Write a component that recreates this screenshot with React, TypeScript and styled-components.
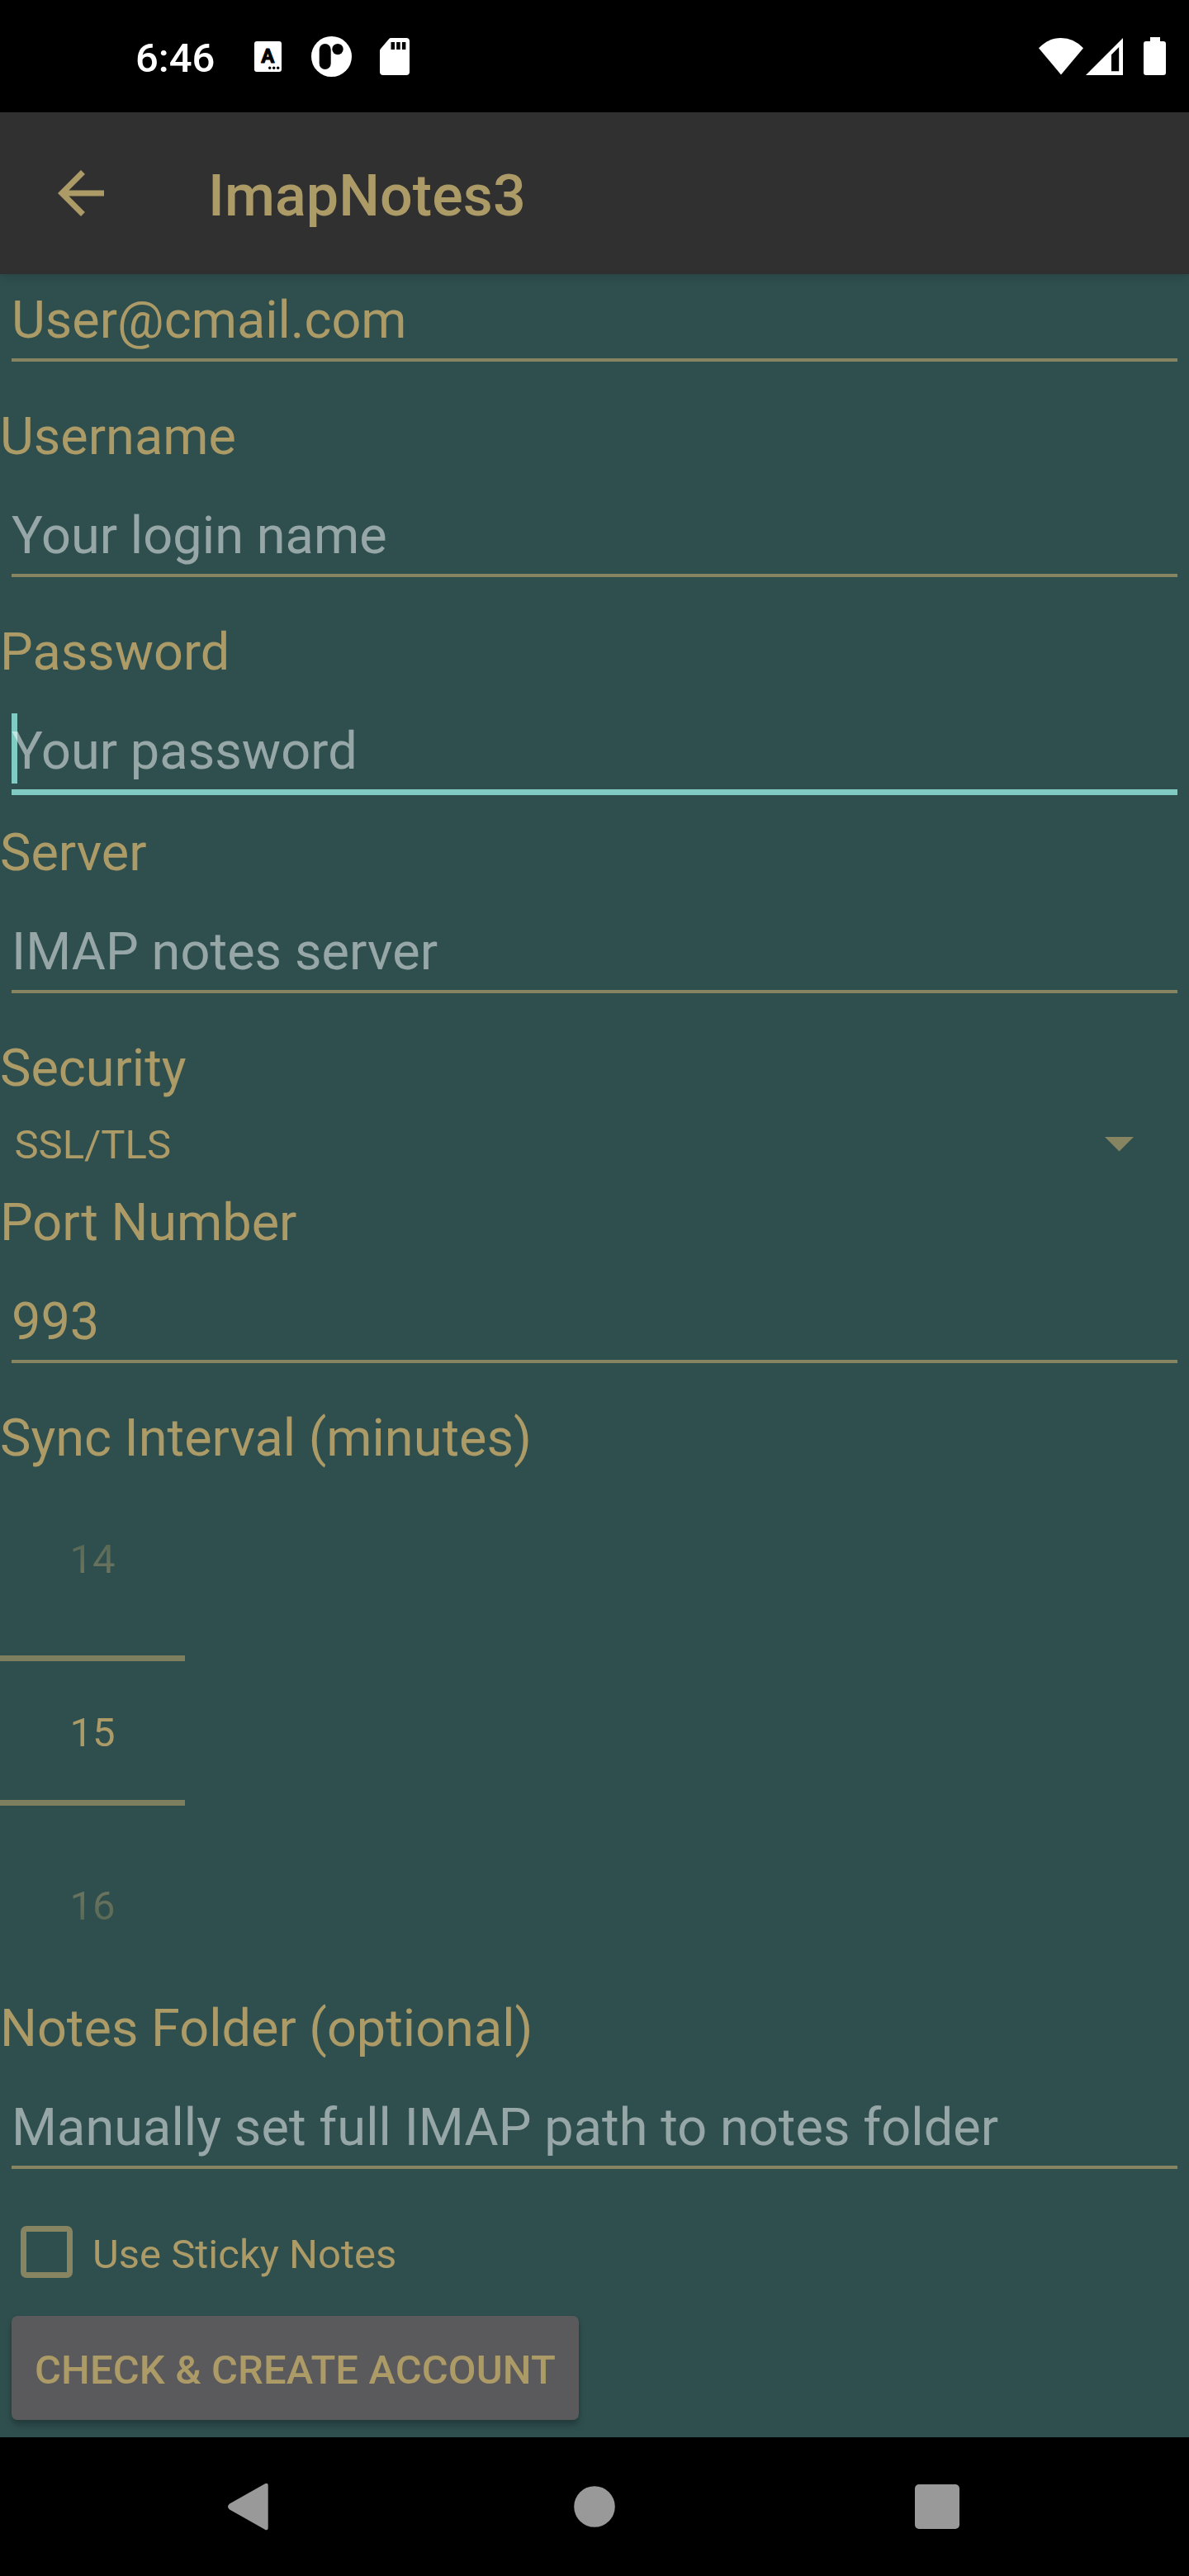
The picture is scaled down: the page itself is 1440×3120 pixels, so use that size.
import React from 'react';
import styled, { createGlobalStyle, css } from 'styled-components';

const color = {
  background: '#2f4f4f',
  toolbar: '#303030',
  gold: '#ac9b67',
  goldMuted: '#868461',
  divider: '#7d7f5f',
  hint: 'rgba(255, 255, 255, 0.5)',
  accent: '#80cbc4',
  button: '#5a595b',
  nav: '#999999',
};

const GlobalStyle = createGlobalStyle`
  *, *::before, *::after { box-sizing: border-box; }
  body {
    margin: 0;
    background: #000;
    font-family: Roboto, sans-serif;
  }
`;

const Screen = styled.div`
  display: flex;
  flex-direction: column;
  width: 1440px;
  height: 3120px;
  overflow: hidden;
  background: ${color.background};
`;

const StatusBar = styled.header`
  display: flex;
  justify-content: space-between;
  flex: none;
  height: 136px;
  background: #000;
  color: #fff;
`;

const StatusGroup = styled.div<{ $start?: number }>`
  display: flex;
  height: 136px;
  align-items: center;
  padding-left: ${({ $start }) => $start ?? 0}px;
`;

const Clock = styled.span`
  width: 99px;
  margin-top: 5px;
  font-size: 49px;
  font-weight: 500;
  line-height: 57px;
  white-space: nowrap;
`;

const StatusIcon = styled.svg<{ $gap: number }>`
  display: block;
  flex: none;
  margin-left: ${({ $gap }) => $gap}px;
`;

const IconLetter = styled.text`
  font: 700 24px Roboto, sans-serif;
  text-anchor: middle;
  fill: #000;
  stroke: #000;
  stroke-width: 1;
  stroke-linejoin: round;
`;

const Toolbar = styled.div`
  display: flex;
  align-items: center;
  flex: none;
  height: 196px;
  padding: 0 56px;
  background: ${color.toolbar};
  color: ${color.gold};
  box-shadow: 0 3px 14px rgba(0, 0, 0, 0.16);
`;

const BackButton = styled.button`
  display: flex;
  width: 84px;
  height: 84px;
  padding: 0;
  border: 0;
  background: none;
  color: inherit;
`;

const Title = styled.h1`
  margin: 6px 0 0 112px;
  font-size: 70px;
  font-weight: 500;
  letter-spacing: 0.1px;
  line-height: 82px;
`;

const Form = styled.main`
  display: flex;
  flex: 1;
  flex-direction: column;
`;

const Label = styled.label<{ $space: number }>`
  display: block;
  padding-top: ${({ $space }) => $space}px;
  color: ${color.gold};
  font-size: 63px;
  line-height: 73px;
  white-space: nowrap;
`;

const Field = styled.div<{ $space: number; $focused?: boolean }>`
  position: relative;
  margin: ${({ $space }) => $space}px 14px 0;
  padding-bottom: 10px;
  border-bottom: 4px solid ${color.goldMuted};
  font-size: 63px;
  line-height: 73px;
  white-space: nowrap;
  ${({ $focused }) =>
    $focused &&
    css`
      border-bottom: 7px solid ${color.accent};
    `}
`;

const FieldText = styled.span<{ $hint?: boolean }>`
  position: relative;
  display: block;
  color: ${({ $hint }) => ($hint ? color.hint : color.gold)};
  letter-spacing: ${({ $hint }) => ($hint ? '0.08px' : 'normal')};
`;

const Caret = styled.i`
  position: absolute;
  top: -9px;
  left: 0;
  width: 7px;
  height: 85px;
  background: ${color.accent};
`;

const Spinner = styled.div`
  display: flex;
  align-items: flex-start;
  justify-content: space-between;
  height: 85px;
  padding: 28px 67px 0 17.5px;
  color: ${color.gold};
  font-size: 49px;
  line-height: 57px;
`;

const DropArrow = styled.svg`
  display: block;
  margin-top: 19px;
`;

const Picker = styled.div`
  display: flex;
  flex-direction: column;
  width: 224px;
  height: 642px;
  color: ${color.gold};
  font-size: 49px;
  line-height: 57px;
  text-align: center;
`;

const Faded = styled.div<{ $edge: 'top' | 'bottom' }>`
  height: ${({ $edge }) => ($edge === 'top' ? 227 : 233)}px;
  padding-top: ${({ $edge }) => ($edge === 'top' ? 82 : 93)}px;
`;

const FadedValue = styled.span<{ $edge: 'top' | 'bottom' }>`
  display: block;
  color: transparent;
  background: linear-gradient(
    to ${({ $edge }) => $edge},
    #737760,
    #536654
  );
  background-clip: text;
  -webkit-background-clip: text;
`;

const Current = styled.div`
  height: 182px;
  padding-top: 58px;
  border-top: 7px solid ${color.divider};
  border-bottom: 7px solid ${color.divider};
`;

const CheckRow = styled.label`
  display: flex;
  align-items: flex-start;
  height: 178px;
  padding: 69px 0 0 24.5px;
  color: ${color.gold};
  font-size: 49px;
  line-height: 57px;
`;

const CheckBox = styled.span`
  width: 63px;
  height: 63px;
  margin-right: 24.5px;
  border: 7px solid ${color.goldMuted};
  border-radius: 7px;
`;

const CheckText = styled.span`
  margin-top: 6px;
`;

const SubmitButton = styled.button`
  width: 687px;
  height: 126px;
  margin-left: 14px;
  padding: 5px 0 0;
  border: 0;
  border-radius: 7px;
  background: ${color.button};
  color: ${color.gold};
  font: 500 49px/57px Roboto, sans-serif;
  letter-spacing: 0.1px;
  white-space: nowrap;
  box-shadow: 0 7px 9px rgba(0, 0, 0, 0.2), 0 2px 5px rgba(0, 0, 0, 0.1);
`;

const NavBar = styled.nav`
  position: relative;
  display: flex;
  align-items: center;
  justify-content: space-between;
  flex: none;
  height: 168px;
  padding: 0 270px;
  background: #000;
`;

const NavButton = styled.button`
  display: flex;
  align-items: center;
  justify-content: center;
  width: 70px;
  height: 70px;
  padding: 0;
  border: 0;
  background: none;
`;

interface TextFieldProps {
  label?: string;
  labelSpace?: number;
  space?: number;
  value?: string;
  hint?: string;
  focused?: boolean;
}

function TextField({
  label,
  labelSpace = 54,
  space = 47,
  value,
  hint,
  focused,
}: TextFieldProps) {
  return (
    <>
      {label && <Label $space={labelSpace}>{label}</Label>}
      <Field $space={space} $focused={focused}>
        {focused && <Caret />}
        <FieldText $hint={!value}>{value ?? hint}</FieldText>
      </Field>
    </>
  );
}

function StatusIcons() {
  return (
    <StatusBar>
      <StatusGroup $start={164}>
        <Clock>6:46</Clock>
        <StatusIcon $gap={45} width="33" height="37" viewBox="0 0 33 37">
          <rect width="33" height="37" rx="3" fill="#fff" />
          <IconLetter x="16.3" y="26">A</IconLetter>
          <circle cx="18.7" cy="32.3" r="1.7" />
          <circle cx="23.7" cy="32.3" r="1.7" />
          <circle cx="28.7" cy="32.3" r="1.7" />
        </StatusIcon>
        <StatusIcon $gap={36} width="49" height="49" viewBox="0 0 49 49">
          <circle cx="24.5" cy="24.5" r="24.5" fill="#fff" />
          <rect x="9.7" y="9" width="14" height="31" rx="7" />
          <circle cx="32" cy="15.6" r="6.7" />
        </StatusIcon>
        <StatusIcon $gap={34} width="36" height="45" viewBox="0 0 36 45">
          <path
            d="M13.5 0H32a4 4 0 0 1 4 4v37a4 4 0 0 1-4 4H4a4 4 0 0 1-4-4V15.5q0-1.500 1-2.500L11 1.200Q12 0 13.5 0Z"
            fill="#fff"
          />
          <path d="M13.5 5h4.5v9h-4.5zM20.2 5h4.5v9h-4.5zM26.9 5h4.5v9h-4.5z" />
        </StatusIcon>
      </StatusGroup>
      <StatusGroup>
        <StatusIcon $gap={0} width="54" height="45" viewBox="0 0 54 45">
          <path d="M0 12.3Q11.5 0 27 0t27 12.3L27 44.5Z" fill="#fff" />
        </StatusIcon>
        <StatusIcon $gap={3} width="45" height="45" viewBox="0 0 45 45">
          <path
            d="M45 0v45H0ZM40.2 11 31 20.2V40.3h9.2Z"
            fill="#fff"
            fillRule="evenodd"
          />
        </StatusIcon>
        <StatusIcon $gap={25} width="55" height="46" viewBox="0 0 55 46">
          <path
            d="M8 0h12v5h4a3 3 0 0 1 3 3v35a3 3 0 0 1-3 3H3a3 3 0 0 1-3-3V8a3 3 0 0 1 3-3h5Z"
            fill="#fff"
          />
        </StatusIcon>
      </StatusGroup>
    </StatusBar>
  );
}

export default function App() {
  return (
    <>
      <GlobalStyle />
      <Screen>
        <StatusIcons />
        <Toolbar>
          <BackButton aria-label="Back">
            <svg width="84" height="84" viewBox="0 0 24 24" fill="currentColor">
              <path d="M20 11H7.83l5.59-5.59L12 4l-8 8 8 8 1.41-1.41L7.83 13H20v-2z" />
            </svg>
          </BackButton>
          <Title>ImapNotes3</Title>
        </Toolbar>
        <Form>
          <TextField space={19} value="User@cmail.com" />
          <TextField label="Username" hint="Your login name" />
          <TextField label="Password" hint="Your password" focused />
          <TextField label="Server" labelSpace={33} hint="IMAP notes server" />
          <Label $space={54}>Security</Label>
          <Spinner>
            SSL/TLS
            <DropArrow width="35" height="18" viewBox="0 0 35 18">
              <path d="M0 0h35L17.5 17.5Z" fill={color.goldMuted} />
            </DropArrow>
          </Spinner>
          <TextField label="Port Number" labelSpace={29} value="993" />
          <Label $space={54}>Sync Interval (minutes)</Label>
          <Picker>
            <Faded $edge="top">
              <FadedValue $edge="top">14</FadedValue>
            </Faded>
            <Current>15</Current>
            <Faded $edge="bottom">
              <FadedValue $edge="bottom">16</FadedValue>
            </Faded>
          </Picker>
          <TextField
            label="Notes Folder (optional)"
            labelSpace={0}
            hint="Manually set full IMAP path to notes folder"
          />
          <CheckRow>
            <CheckBox />
            <CheckText>Use Sticky Notes</CheckText>
          </CheckRow>
          <SubmitButton>CHECK &amp; CREATE ACCOUNT</SubmitButton>
        </Form>
        <NavBar>
          <NavButton aria-label="Back">
            <svg width="70" height="70" viewBox="0 0 70 70">
              <path
                d="M50.5 7.6Q54.7 5 54.7 10V60Q54.7 65 50.5 62.4L8 38.5Q4 35 8 31.5Z"
                fill={color.nav}
              />
            </svg>
          </NavButton>
          <NavButton aria-label="Home">
            <svg width="50" height="50" viewBox="0 0 50 50">
              <circle cx="25" cy="25" r="24.8" fill={color.nav} />
            </svg>
          </NavButton>
          <NavButton aria-label="Recent apps">
            <svg width="54" height="54" viewBox="0 0 54 54">
              <rect width="54" height="54" rx="5" fill={color.nav} />
            </svg>
          </NavButton>
        </NavBar>
      </Screen>
    </>
  );
}
